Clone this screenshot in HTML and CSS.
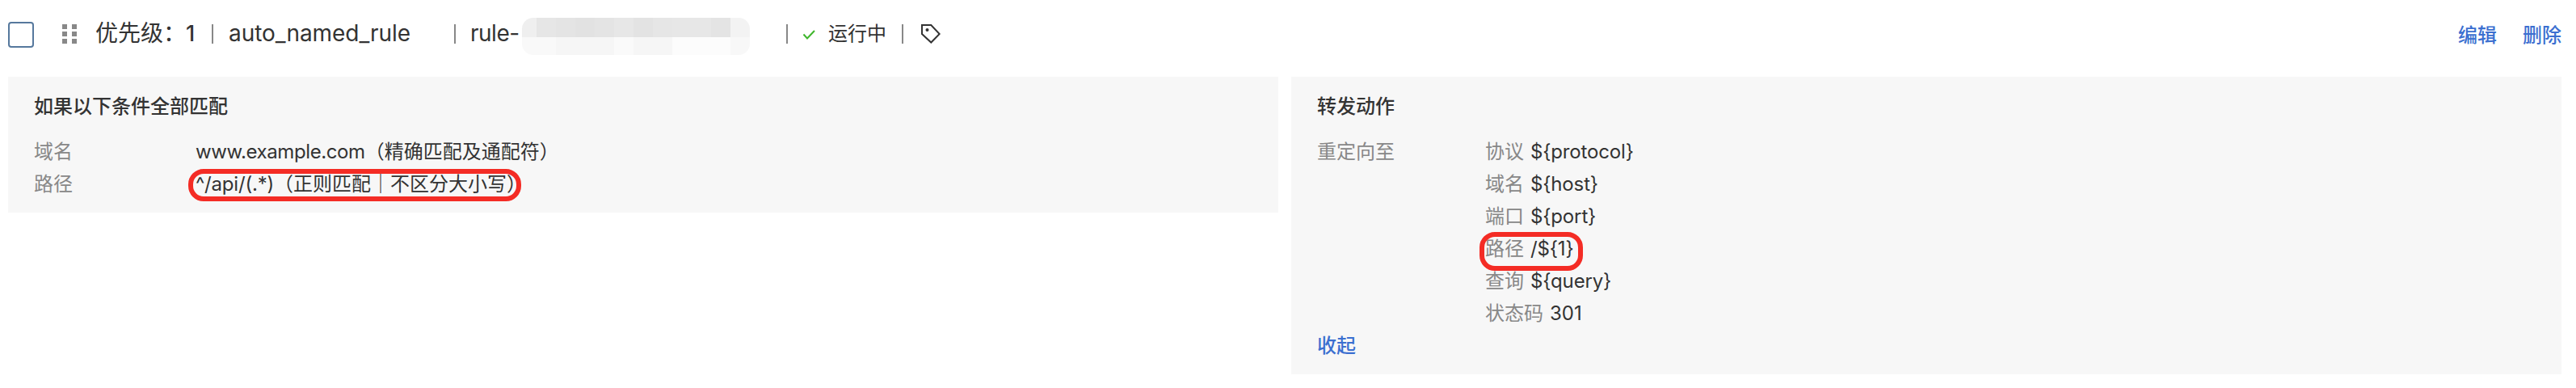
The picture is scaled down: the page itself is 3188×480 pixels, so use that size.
FILE: index.html
```
<!DOCTYPE html>
<html lang="zh-CN">

<head>
  <meta charset="utf-8">
  <meta name="viewport" content="width=device-width, initial-scale=1.0">
  <title>转发规则</title>
  <link rel="stylesheet" href="styles.css">
</head>

<body>
  <div class="rule-header">
    <span class="checkbox"></span>
    <span class="drag"><i></i><i></i><i></i><i></i><i></i><i></i></span>
    <span class="priority">优先级：<b>1</b></span>
    <span class="bar"></span>
    <span class="rule-name">auto_named_rule</span>
    <span class="bar"></span>
    <span class="rule-id">rule-</span>
    <svg class="mask" width="282" height="46">
      <rect width="18" height="24" fill="#efefef"/>
      <rect x="18" width="24" height="24" fill="#e6e6e6"/>
      <rect x="42" width="24" height="24" fill="#e4e4e4"/>
      <rect x="66" width="24" height="24" fill="#e2e2e2"/>
      <rect x="90" width="24" height="24" fill="#e4e4e4"/>
      <rect x="114" width="24" height="24" fill="#e7e7e7"/>
      <rect x="138" width="24" height="24" fill="#e3e3e3"/>
      <rect x="162" width="24" height="24" fill="#e6e6e6"/>
      <rect x="186" width="48" height="24" fill="#e7e7e7"/>
      <rect x="234" width="24" height="24" fill="#e4e4e4"/>
      <rect x="258" width="24" height="24" fill="#f3f3f3"/>
      <rect y="24" width="42" height="22" fill="#f9f9f9"/>
      <rect x="42" y="24" width="72" height="22" fill="#f6f6f6"/>
      <rect x="114" y="24" width="24" height="22" fill="#fafafa"/>
      <rect x="138" y="24" width="48" height="22" fill="#f6f6f6"/>
      <rect x="186" y="24" width="72" height="22" fill="#fcfcfc"/>
      <rect x="258" y="24" width="24" height="22" fill="#f8f8f8"/>
    </svg>
    <span class="bar"></span>
    <svg class="check" width="16" height="14" viewBox="0 0 16 14"><path d="M1.5 6.5L6 11.5L15 2" fill="none" stroke="#3fb62c" stroke-width="2"/></svg>
    <span class="status">运行中</span>
    <span class="bar"></span>
    <svg class="tag" width="24" height="24" viewBox="0 0 24 24"><path d="M1 1H12.3L22.7 12L12.3 22.5L1 12Z" fill="none" stroke="#333" stroke-width="2"/><circle cx="7.5" cy="7" r="2" fill="#333"/></svg>
    <div class="actions"><a>编辑</a><a>删除</a></div>
  </div>

  <div class="panels">
    <div class="panel">
      <div class="title">如果以下条件全部匹配</div>
      <div class="row"><span class="label">域名</span><span class="value"><span class="domain">www.example.com</span>（精确匹配及通配符）</span></div>
      <div class="row"><span class="label">路径</span><span class="value"><span class="regex">^/api/(.*)</span>（正则匹配｜不区分大小写）<span class="ring ring-regex"></span></span></div>
    </div>
    <div class="panel">
      <div class="title">转发动作</div>
      <div class="row">
        <span class="label wide">重定向至</span>
        <div>
          <div class="item"><span class="key">协议</span><span class="var">${protocol}</span></div>
          <div class="item"><span class="key">域名</span><span class="var">${host}</span></div>
          <div class="item"><span class="key">端口</span><span class="var">${port}</span></div>
          <div class="item"><span class="key">路径</span><span class="var">/${1}</span><span class="ring ring-path"></span></div>
          <div class="item"><span class="key">查询</span><span class="var">${query}</span></div>
          <div class="item"><span class="key">状态码</span><span>301</span></div>
        </div>
      </div>
      <a class="collapse">收起</a>
    </div>
  </div>
</body>

</html>
```

FILE: styles.css
```
body {
  margin: 0;
  background: #fff;
  color: #333;
  font-family: Inter, "Noto Sans CJK SC", sans-serif;
  font-size: 24px;
  line-height: 40px;
  white-space: nowrap;
}

a {
  color: #3b6fd0;
  font-weight: 500;
}

.rule-header {
  display: flex;
  align-items: center;
  box-sizing: border-box;
  height: 95px;
  padding: 0 18px 11px 10px;
}

.rule-header > * {
  flex: none;
}

.checkbox {
  box-sizing: border-box;
  width: 32px;
  height: 32px;
  margin-top: 2px;
  border: 2px solid #56789d;
  border-radius: 4px;
}

.drag {
  display: grid;
  grid-template-columns: 6px 6px;
  gap: 3px 6px;
  margin-left: 35px;
}

.drag i {
  height: 6px;
  background: #888;
}

.priority {
  width: 144px;
  margin: -2px 0 0 23px;
  font-size: 28px;
}

.priority b {
  font-size: 27px;
  font-weight: 500;
}

.bar {
  width: 2px;
  height: 24px;
  background: #888;
}

.rule-name {
  width: 279px;
  margin: -2px 0 0 19px;
  font-size: 28px;
  letter-spacing: -0.05px;
}

.rule-id {
  width: 64px;
  margin: -2px 0 0 18px;
  font-size: 28px;
  letter-spacing: -0.5px;
}

.mask {
  margin: 6px 45px 0 0;
  border-radius: 14px;
}

.check {
  margin: 2px 16px 0 18px;
}

.status {
  width: 91px;
}

.tag {
  margin-left: 22px;
}

.actions {
  display: flex;
  gap: 32px;
  margin: 4px 0 0 auto;
}

.panels {
  display: grid;
  grid-template-columns: 1572px 1572px;
  gap: 16px;
  align-items: start;
  padding-left: 10px;
}

.panel {
  box-sizing: border-box;
  padding: 17px 32px 15px;
  background: #f7f7f7;
}

.title {
  margin-bottom: 16px;
  font-weight: 500;
}

.row {
  display: flex;
}

.label {
  width: 200px;
  color: #888;
}

.wide {
  width: 208px;
}

.domain {
  letter-spacing: -0.4px;
}

.regex {
  letter-spacing: -0.2px;
}

.value,
.item {
  position: relative;
}

.item {
  display: flex;
  gap: 8px;
}

.key {
  color: #888;
}

.var {
  letter-spacing: -0.15px;
}

/* red marks drawn over the text */
.ring {
  position: absolute;
  box-sizing: border-box;
  border: 6px solid #f42c25;
}

.ring-regex {
  left: -9px;
  top: 1px;
  width: 412px;
  height: 40px;
  border-radius: 19px;
}

.ring-path {
  left: -7px;
  top: -1px;
  width: 128px;
  height: 48px;
  border-radius: 19px;
}

.collapse {
  display: block;
}
```
